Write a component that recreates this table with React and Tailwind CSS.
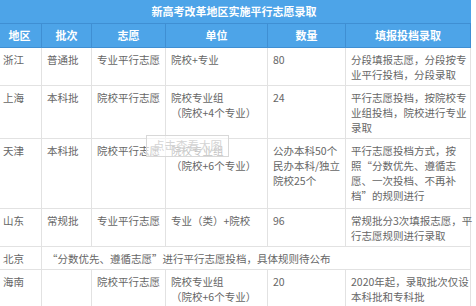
import React from "react";

const rows = [
  {
    a: "浙江",
    b: "普通批",
    c: "专业平行志愿",
    d: ["院校+专业"],
    e: ["80"],
    f: ["分段填报志愿，分段按专", "业平行投档，分段录取"],
  },
  {
    a: "上海",
    b: "本科批",
    c: "院校平行志愿",
    d: ["院校专业组", "（院校+4个专业）"],
    e: ["24"],
    f: ["平行志愿投档，按院校专", "业组投档，院校进行专业", "录取"],
  },
  {
    a: "天津",
    b: "本科批",
    c: "院校平行志愿",
    d: ["院校专业组", "（院校+6个专业）"],
    e: ["公办本科50个", "民办本科/独立", "院校25个"],
    f: ["平行志愿投档方式，按", "照“分数优先、遵循志", "愿、一次投档、不再补", "档”的规则进行"],
    tall: true,
  },
  {
    a: "山东",
    b: "常规批",
    c: "专业平行志愿",
    d: ["专业（类）+院校"],
    e: ["96"],
    f: ["常规批分3次填报志愿，平", "行志愿规则进行录取"],
  },
];

function Lines({ items }) {
  return items.map((t, i) => (
    <span key={i} className="block whitespace-nowrap">
      {t}
    </span>
  ));
}

const td =
  "border border-[#e2e2e2] px-[5px] pt-[4px] pb-[3px] align-top text-left whitespace-nowrap";
const tdTall =
  "border border-[#e2e2e2] px-[5px] pt-[4px] pb-[5px] align-top text-left whitespace-nowrap";
const th =
  "border border-[#3f8fd3] h-[24px] p-0 text-center font-bold text-white text-[11px]";

export default function App() {
  return (
    <div className="relative w-[476px] h-[306px] overflow-hidden bg-white font-['Noto_Sans_CJK_SC','Noto_Sans',sans-serif]">
      <table className="-ml-[3px] w-[473px] table-fixed border-collapse text-[10.5px] leading-[15px] text-[#666]">
        <colgroup>
          <col className="w-[44px]" />
          <col className="w-[50px]" />
          <col className="w-[74px]" />
          <col className="w-[102px]" />
          <col className="w-[78px]" />
          <col className="w-[125px]" />
        </colgroup>
        <thead>
          <tr className="bg-[#4da4e8]">
            <th
              colSpan={6}
              className="h-[23px] p-0 text-center font-bold text-white text-[11px] border-b border-[#3f8fd3]"
            >
              新高考改革地区实施平行志愿录取
            </th>
          </tr>
          <tr className="bg-[#4da4e8]">
            <th className={th}>地区</th>
            <th className={th}>批次</th>
            <th className={th}>志愿</th>
            <th className={th}>单位</th>
            <th className={th}>数量</th>
            <th className={th}>填报投档录取</th>
          </tr>
        </thead>
        <tbody>
          {rows.map((r) => {
            const c = r.tall ? tdTall : td;
            return (
              <tr key={r.a}>
                <td className={c}>{r.a}</td>
                <td className={c}>{r.b}</td>
                <td className={c}>{r.c}</td>
                <td className={c}>
                  <Lines items={r.d} />
                </td>
                <td className={c}>
                  <Lines items={r.e} />
                </td>
                <td className={c}>
                  <Lines items={r.f} />
                </td>
              </tr>
            );
          })}
          <tr>
            <td className={td}>北京</td>
            <td className={td} colSpan={5}>
              “分数优先、遵循志愿”进行平行志愿投档，具体规则待公布
            </td>
          </tr>
          <tr>
            <td className={td}>海南</td>
            <td className={td}></td>
            <td className={td}>院校平行志愿</td>
            <td className={td}>
              <Lines items={["院校专业组", "（院校+6个专业）"]} />
            </td>
            <td className={td}>20</td>
            <td className={td}>
              <Lines items={["2020年起，录取批次仅设", "本科批和专科批"]} />
            </td>
          </tr>
        </tbody>
      </table>
      <div className="absolute left-[146px] top-[135px] flex h-[22px] w-[83px] items-center justify-center border border-[#d8d8d8] bg-white/60 text-[11.5px] text-[#d4d4d4]">
        点击查看大图
      </div>
    </div>
  );
}
